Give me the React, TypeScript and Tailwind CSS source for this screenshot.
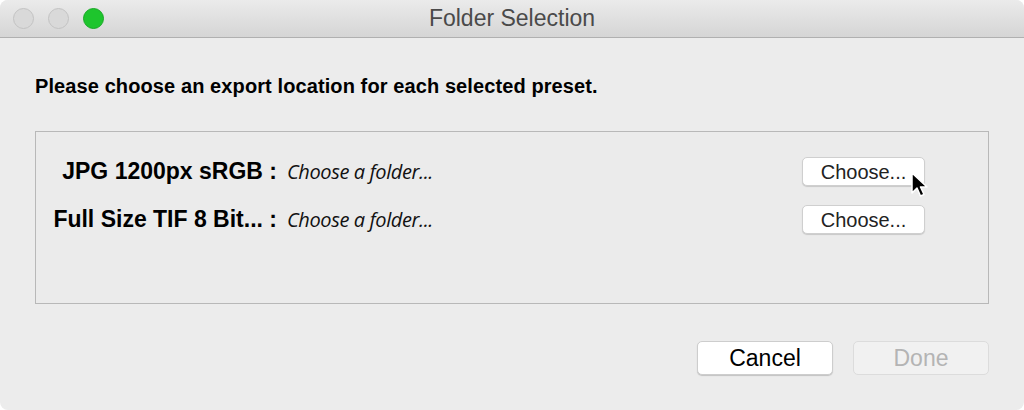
const sans = { fontFamily: '"Liberation Sans", Arial, sans-serif' };

function PresetRow({ name }: { name: string }) {
  return (
    <div className="flex items-center h-[29px]">
      <div className="w-[251px] text-right text-[23px] font-bold text-black pr-[10px] whitespace-nowrap">{name}</div>
      <div className="flex-1 text-[20px] italic text-[#111] tracking-[-0.4px]" style={{ fontFamily: '"Open Sans", sans-serif' }}>
        Choose a folder...
      </div>
      <button className="w-[123px] h-[29px] mr-[63px] bg-white rounded-[5px] border border-[#cfcfcf] shadow-[0_1px_1px_rgba(0,0,0,0.15)] text-[20px] leading-none text-[#222]">
        Choose...
      </button>
    </div>
  );
}

export default function App() {
  return (
    <div className="w-[1024px] h-[410px] bg-[#ececec] rounded-[8px] overflow-hidden flex flex-col relative" style={sans}>
      {/* title bar */}
      <div className="h-[38px] flex items-center relative bg-gradient-to-b from-[#ebebeb] to-[#d5d5d5] border-b border-[#b0b0b0]">
        <div className="flex gap-[14px] pl-[13px]">
          <span className="w-[21px] h-[21px] rounded-full bg-[#d9d9d9] border border-[#c2c2c2]" />
          <span className="w-[21px] h-[21px] rounded-full bg-[#d9d9d9] border border-[#c2c2c2]" />
          <span className="w-[21px] h-[21px] rounded-full bg-[#1ec52d] border border-[#18a825]" />
        </div>
        <div className="absolute inset-0 flex items-center justify-center text-[23px] text-[#4a4a4a]">
          Folder Selection
        </div>
      </div>

      <div className="flex flex-col px-[35px]">
        <p className="mt-[36px] h-[24px] leading-[24px] text-[20px] font-bold text-black tracking-[0.1px]">
          Please choose an export location for each selected preset.
        </p>

        <div className="mt-[33px] h-[173px] border border-[#b8b8b8] bg-[#ebebeb] flex flex-col gap-[19px] pt-[25px]">
          <PresetRow name="JPG 1200px sRGB :" />
          <PresetRow name="Full Size TIF 8 Bit... :" />
        </div>

        <div className="mt-[37px] flex justify-end gap-[20px]">
          <button className="w-[136px] h-[34px] bg-white rounded-[5px] border border-[#cdcdcd] shadow-[0_1px_1px_rgba(0,0,0,0.18)] text-[23px] leading-none text-black">
            Cancel
          </button>
          <button className="w-[136px] h-[34px] bg-[#f1f1f1] rounded-[5px] border border-[#dcdcdc] text-[23px] leading-none text-[#b4b4b4]">
            Done
          </button>
        </div>
      </div>

      {/* mouse cursor */}
      <svg className="absolute left-[911px] top-[172px]" width="20" height="28" viewBox="0 0 20 28">
        <path d="M1 1 L1 21 L6 16 L9.5 24 L13 22.5 L9.5 15 L16 15 Z" fill="#000" stroke="#fff" strokeWidth="1.5" strokeLinejoin="round" />
      </svg>
    </div>
  );
}
